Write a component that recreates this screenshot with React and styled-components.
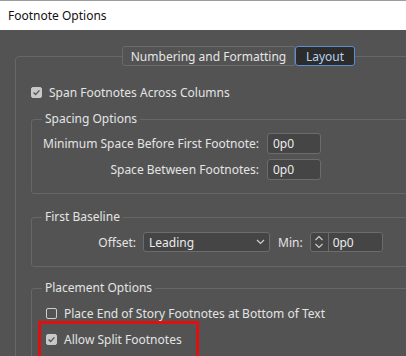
import React from "react";
import styled, { createGlobalStyle } from "styled-components";

const Global = createGlobalStyle`
  html, body { margin: 0; padding: 0; background: #535353; }
  body { font-family: "Noto Sans", "Open Sans", "Liberation Sans", sans-serif; }
  * { box-sizing: border-box; }
`;

const Window = styled.div`
  width: 406px;
  height: 356px;
  overflow: hidden;
  display: flex;
  flex-direction: column;
  background: #535353;
  font-size: 12px;
  color: #e4e4e4;
`;

const TitleBar = styled.div`
  height: 30px;
  flex: none;
  background: #ffffff;
  border-top: 1px solid #9c9c9c;
  display: flex;
  align-items: center;
  padding-left: 8px;
  color: #111;
  font-size: 12px;
`;

const Body = styled.div`
  flex: 1;
  padding: 26px 0 0 15px;
`;

const Panel = styled.div`
  width: 440px;
  height: 340px;
  border: 1px solid #676767;
  border-radius: 4px;
`;

const TabBar = styled.div`
  display: flex;
  margin: -11px 0 0 106px;
  height: 20px;
  width: fit-content;
  border-radius: 3px;
  background: #535353;
`;

const Tab = styled.div`
  height: 20px;
  display: flex;
  align-items: center;
  justify-content: center;
  width: ${(p) => p.$w}px;
  border: 1px solid ${(p) => (p.$active ? "#5a8fd0" : "#6a6a6a")};
  border-radius: ${(p) => (p.$active ? "3px" : "3px 0 0 3px")};
  background: ${(p) => (p.$active ? "#2c2c2c" : "#535353")};
  color: ${(p) => (p.$active ? "#b8d1ee" : "#e6e6e6")};
  font-size: 12px;
`;

const CheckRow = styled.div`
  display: flex;
  align-items: center;
  gap: 7px;
  height: 14px;
  margin: ${(p) => p.$m || "0"};
  white-space: nowrap;
`;

const Box = styled.span`
  width: 11px;
  height: 11px;
  flex: none;
  border-radius: 2px;
  display: flex;
  align-items: center;
  justify-content: center;
  background: ${(p) => (p.$checked ? "#c9c9c9" : "transparent")};
  border: 1px solid ${(p) => (p.$checked ? "#c9c9c9" : "#cfcfcf")};
`;

const Group = styled.fieldset`
  margin: ${(p) => p.$mt}px 0 0 15px;
  padding: ${(p) => p.$pad};
  border: 1px solid #676767;
  border-radius: 3px;
  min-width: 0;
`;

const Legend = styled.legend`
  margin-left: 10px;
  padding: 0 3px;
  line-height: 16px;
  color: #e4e4e4;
`;

const FieldGrid = styled.div`
  display: grid;
  grid-template-columns: 227px 54px;
  column-gap: 8px;
  row-gap: 5px;
  align-items: center;
`;

const Label = styled.span`
  justify-self: end;
  white-space: nowrap;
`;

const Input = styled.div`
  height: 21px;
  width: ${(p) => p.$w || 54}px;
  border: 1px solid #6c6c6c;
  border-radius: 3px;
  background: #454545;
  display: flex;
  align-items: center;
  padding-left: 5px;
  color: #ececec;
`;

const BaselineRow = styled.div`
  display: flex;
  align-items: center;
`;

const OffsetLabel = styled.span`
  width: 104px;
  text-align: right;
  margin-right: 7px;
`;

const Select = styled.div`
  width: 127px;
  height: 20px;
  border: 1px solid #6c6c6c;
  border-radius: 3px;
  background: #454545;
  display: flex;
  align-items: center;
  justify-content: space-between;
  padding: 0 4px 0 5px;
  color: #ececec;
`;

const MinLabel = styled.span`
  margin: 0 7px 0 8px;
`;

const Spinner = styled.div`
  width: 73px;
  height: 20px;
  border: 1px solid #6c6c6c;
  border-radius: 3px;
  background: #454545;
  display: flex;
  color: #ececec;
`;

const Arrows = styled.div`
  width: 18px;
  border-right: 1px solid #6c6c6c;
  display: flex;
  align-items: center;
  justify-content: center;
`;

const SpinValue = styled.div`
  display: flex;
  align-items: center;
  padding-left: 4px;
`;

const Highlight = styled.div`
  margin: 1px 0 0 6px;
  width: 161px;
  height: 60px;
  border: 3px solid #e01010;
  padding: 8px 0 0 5px;
`;

const Check = ({ checked }) => (
  <Box $checked={checked}>
    {checked && (
      <svg width="9" height="9" viewBox="0 0 9 9">
        <path d="M1.6 4.6 L3.6 6.6 L7.4 2.4" fill="none" stroke="#555" strokeWidth="1.4" />
      </svg>
    )}
  </Box>
);

export default function App() {
  return (
    <>
      <Global />
      <Window>
        <TitleBar>Footnote Options</TitleBar>
        <Body>
          <Panel>
            <TabBar>
              <Tab $w={173}>Numbering and Formatting</Tab>
              <Tab $w={60} $active>Layout</Tab>
            </TabBar>
            <CheckRow $m="19px 0 0 15px">
              <Check checked />
              <span>Span Footnotes Across Columns</span>
            </CheckRow>
            <Group $mt={12} $pad="6px 0 13px 0">
              <Legend>Spacing Options</Legend>
              <FieldGrid>
                <Label>Minimum Space Before First Footnote:</Label>
                <Input>0p0</Input>
                <Label>Space Between Footnotes:</Label>
                <Input>0p0</Input>
              </FieldGrid>
            </Group>
            <Group $mt={15} $pad="7px 0 14px 0">
              <Legend>First Baseline</Legend>
              <BaselineRow>
                <OffsetLabel>Offset:</OffsetLabel>
                <Select>
                  <span>Leading</span>
                  <svg width="9" height="6" viewBox="0 0 9 6">
                    <path d="M1 1 L4.5 4.5 L8 1" fill="none" stroke="#cfcfcf" strokeWidth="1.2" />
                  </svg>
                </Select>
                <MinLabel>Min:</MinLabel>
                <Spinner>
                  <Arrows>
                    <svg width="10" height="16" viewBox="0 0 10 16">
                      <path d="M1.5 6 L5 2.5 L8.5 6" fill="none" stroke="#d0d0d0" strokeWidth="1.1" />
                      <path d="M1.5 10 L5 13.5 L8.5 10" fill="none" stroke="#d0d0d0" strokeWidth="1.1" />
                    </svg>
                  </Arrows>
                  <SpinValue>0p0</SpinValue>
                </Spinner>
              </BaselineRow>
            </Group>
            <Group $mt={13} $pad="10px 0 0 0">
              <Legend>Placement Options</Legend>
              <CheckRow $m="0 0 0 14px">
                <Check />
                <span>Place End of Story Footnotes at Bottom of Text</span>
              </CheckRow>
              <Highlight>
                <CheckRow>
                  <Check checked />
                  <span>Allow Split Footnotes</span>
                </CheckRow>
              </Highlight>
            </Group>
          </Panel>
        </Body>
      </Window>
    </>
  );
}
